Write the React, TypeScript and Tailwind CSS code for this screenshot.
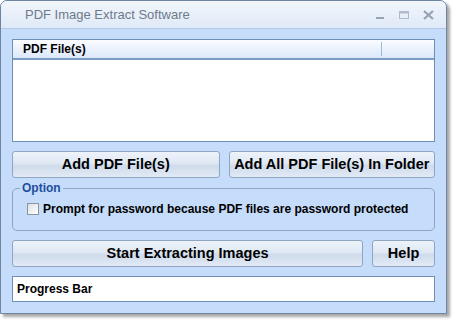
import React from 'react';

const Btn: React.FC<{ label: string; className?: string }> = ({ label, className = '' }) => (
    <button
        className={`h-[27px] rounded-[3px] border border-[#8fa6c3] bg-[linear-gradient(to_bottom,#eef3fa_0%,#dfe8f3_45%,#cfdbeb_55%,#e2eaf5_100%)] text-[14.5px] font-bold text-black ${className}`}
    >
        {label}
    </button>
);

export default function App() {
    return (
        <div className="w-[453px] h-[321px] bg-white font-['Liberation_Sans',Arial,sans-serif]">
            <div className="w-[447px] h-[314px] flex flex-col rounded-t-[7px] border border-[#6f84a0] bg-[#c5dcfa] shadow-[3px_3px_3px_rgba(0,0,0,0.35)] overflow-hidden">
                {/* title bar */}
                <div className="h-[28px] shrink-0 flex items-center justify-between pl-[24px] pr-[12px] bg-[linear-gradient(to_bottom,#f2f6fc,#dfe9f7)] border-b border-[#b3c9e6]">
                    <span className="text-[13px] text-[#6f7a89]">PDF Image Extract Software</span>
                    <div className="flex items-center gap-[14px]">
                        <svg width="10" height="10" viewBox="0 0 10 10"><rect x="1" y="7" width="8" height="2" fill="#97a4b4" /></svg>
                        <svg width="10" height="10" viewBox="0 0 10 10"><rect x="0.5" y="1.5" width="9" height="7" fill="none" stroke="#b1bccb" /><rect x="0.5" y="1.5" width="9" height="2" fill="#b1bccb" /></svg>
                        <svg width="11" height="10" viewBox="0 0 11 10"><path d="M1 1 L10 9 M10 1 L1 9" stroke="#95a2b3" strokeWidth="2.2" /></svg>
                    </div>
                </div>
                {/* client */}
                <div className="flex-1 flex flex-col px-[11px] pt-[10px] gap-[9px]">
                    <div className="h-[103px] border border-[#6d8fb3] bg-white flex flex-col">
                        <div className="h-[20px] flex items-center border-b-2 border-[#7a9cc2] bg-[linear-gradient(to_bottom,#fbfcff,#dbe8fb)]">
                            <span className="w-[368px] pl-[10px] text-[12px] font-bold text-black">PDF File(s)</span>
                            <span className="h-[14px] w-px bg-[#9cb8dc]" />
                        </div>
                    </div>
                    <div className="flex gap-[9px]">
                        <Btn label="Add PDF File(s)" className="w-[208px]" />
                        <Btn label="Add All PDF File(s) In Folder" className="w-[207px]" />
                    </div>
                    <fieldset className="h-[50px] -mt-[6px] border border-[#8ea4c0] rounded-[5px] px-[14px] pb-[4px]">
                        <legend className="ml-[-7px] px-[2px] text-[12px] font-bold text-[#1e4e9c] leading-[14px]">Option</legend>
                        <label className="flex items-center gap-[4px] mt-[5px] text-[12px] font-bold text-black">
                            <span className="w-[12px] h-[12px] border border-[#8c949e] bg-[linear-gradient(135deg,#dcdfe3,#ffffff)]" />
                            Prompt for password because PDF files are password protected
                        </label>
                    </fieldset>
                    <div className="flex gap-[9px]">
                        <Btn label="Start Extracting Images" className="w-[352px]" />
                        <Btn label="Help" className="w-[63px]" />
                    </div>
                    <div className="h-[26px] border border-[#6d8fb3] bg-white flex items-center pl-[4px] text-[12px] font-bold text-black">
                        Progress Bar
                    </div>
                </div>
            </div>
        </div>
    );
}
